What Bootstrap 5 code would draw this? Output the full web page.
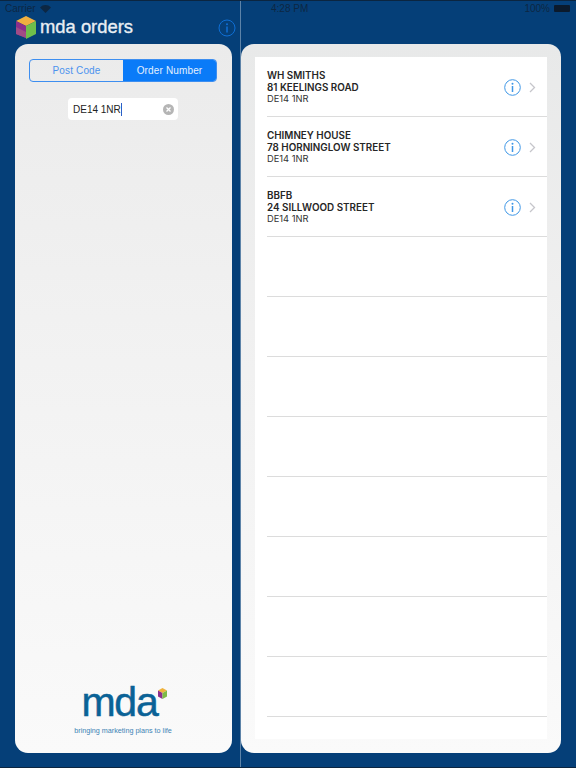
<!DOCTYPE html>
<html lang="en">
<head>
  <meta charset="UTF-8" />
  <meta name="viewport" content="width=device-width, initial-scale=1.0"/>
  <title>mda orders</title>
  <link href="https://cdn.jsdelivr.net/npm/bootstrap@5.3.0/dist/css/bootstrap.min.css" rel="stylesheet">
  <style>
    html, body { height: 768px; overflow: hidden; }
    body {
      background: #053f78;
      font-family: "Liberation Sans", Arial, sans-serif;
      border-top: 1px solid #0b2540;
      border-bottom: 1px solid #0b2540;
    }
    .app-shell { height: 766px; }
    .left-col { width: 241px; border-right: 1px solid #5d83a8; padding: 0 8px 14px 15px; }
    .right-col { width: 335px; padding: 0 15px 14px 0; }
    .status-bar { height: 15px; font-size: 10px; color: #0d2743; line-height: 15px; }
    .left-status { margin-left: -10px; gap: 4px; }
    .right-status { padding-left: 30px; margin-right: -9px; }
    .batt { width: 16px; height: 7px; background: #0b1a2c; border-radius: 1px; }
    .app-header { height: 28px; padding-bottom: 6px; }
    .brand-name { font-size: 18.4px; color: #e9eef3; line-height: 1; margin-left: 3px; -webkit-text-stroke: .35px #e9eef3; }
    .info-top { margin-right: -4px; margin-top: 2px; }
    .side-panel {
      flex: 1;
      background: linear-gradient(#ebebeb, #f2f2f2 45%, #fafafa);
      border-radius: 13px;
      padding: 15px 15px 17px 14px;
    }
    .seg-control { height: 23px; border: 1px solid #3d8ef0; border-radius: 4px; overflow: hidden; font-size: 10px; letter-spacing: .15px; }
    .seg-item { flex: 1; line-height: 21px; text-align: center; color: #4b92ee; }
    .seg-item.on { background: #0a7bf8; color: #e3f0fe; }
    .search-box { width: 110px; height: 22px; margin-top: 16px; background: #fff; border-radius: 4px; font-size: 10px; color: #222; padding: 0 4px 0 5px; }
    .caret-mark { display: inline-block; width: 1px; height: 13px; background: #2b5fc7; vertical-align: -3px; }
    .clear-x { width: 11px; height: 11px; }
    .footer-logo { margin-top: auto; text-align: center; }
    .logo-word { font-size: 41px; color: #0a6296; line-height: 32px; letter-spacing: -1.2px; -webkit-text-stroke: .5px #0a6296; margin-right: 7px; }
    .logo-tag { font-size: 7.2px; color: #3c83b5; line-height: 10px; margin-top: 3px; }
    .logo-wrap { position: relative; display: inline-block; }
    .logo-cube { position: absolute; top: 2px; right: -2px; }
    .orders-panel {
      flex: 1;
      background: linear-gradient(#e8e9e9, #f0f0f0 40%, #fafafa);
      border-radius: 13px;
      padding: 13px 14px;
    }
    .orders-table { height: 682px; background: #fff; overflow: hidden; }
    .order-row { height: 60px; margin-left: 12px; border-bottom: 1px solid #dcdcdc; color: #1c1c1c; }
    .order-text { padding-top: 2px; }
    .order-name { font-family: Inter, "Liberation Sans", sans-serif; font-size: 9.85px; font-weight: 600; line-height: 11.500px; color: #262626; }
    .order-code { font-family: Inter, "Liberation Sans", sans-serif; font-size: 9.3px; line-height: 11.500px; color: #333; }
    .row-tools { gap: 8px; padding: 1px 11px 0 0; }
  </style>
</head>
<body>

<div class="app-shell d-flex">

  <!-- Left column -->
  <div class="left-col d-flex flex-column flex-shrink-0">
    <div class="status-bar left-status d-flex align-items-center">
      <span>Carrier</span>
      <svg width="11" height="8" viewBox="0 0 11 8"><path d="M5.500 8 0 2.500C3-.8 8-.8 11 2.500Z" fill="#0d2743"/></svg>
    </div>
    <div class="app-header d-flex align-items-center">
      <svg width="22" height="23" viewBox="0 0 22 23">
        <path d="M1 5 11 0l10 5-10 5z" fill="#f0b040"/>
        <path d="M1 5l10 5v12L1 18z" fill="#8c2f8c"/>
        <path d="M1 11l10 5v6L1 18z" fill="#a14b86"/>
        <path d="M11 10l10-5v13l-10 5z" fill="#6fbf4b"/>
      </svg>
      <span class="brand-name">mda orders</span>
      <svg class="info-top ms-auto" width="18" height="18" viewBox="0 0 18 18" fill="none">
        <circle cx="9" cy="9" r="8" stroke="#0f6fd6" stroke-width="1"/>
        <circle cx="9" cy="5.200" r="1" fill="#0f6fd6"/>
        <path d="M9 7.500v6" stroke="#0f6fd6" stroke-width="1.500"/>
      </svg>
    </div>
    <div class="side-panel d-flex flex-column">
      <div class="seg-control d-flex">
        <div class="seg-item">Post Code</div>
        <div class="seg-item on">Order Number</div>
      </div>
      <div class="search-box d-flex align-items-center align-self-center">
        <span>DE14 1NR<span class="caret-mark"></span></span>
        <svg class="clear-x ms-auto" viewBox="0 0 11 11">
          <circle cx="5.500" cy="5.500" r="5.500" fill="#b5b5b5"/>
          <path d="M3.500 3.500l4 4m0-4-4 4" stroke="#fff" stroke-width="1.300"/>
        </svg>
      </div>
      <div class="footer-logo">
        <div class="logo-wrap">
          <div class="logo-word">mda</div>
          <svg class="logo-cube" width="9" height="11" viewBox="0 0 9 11">
            <path d="M0 2.500 4.500 0 9 2.500 4.500 5z" fill="#efb23c"/>
            <path d="M0 2.500 4.500 5v6L0 8.500z" fill="#8c2f8c"/>
            <path d="M4.500 5 9 2.500v6L4.500 11z" fill="#7dbb45"/>
          </svg>
        </div>
        <div class="logo-tag">bringing marketing plans to life</div>
      </div>
    </div>
  </div>

  <!-- Right column -->
  <div class="right-col d-flex flex-column flex-grow-1">
    <div class="status-bar right-status d-flex align-items-center">
      <span>4:28 PM</span>
      <span class="ms-auto me-1">100%</span>
      <span class="batt"></span>
    </div>
    <div class="app-header"></div>
    <div class="orders-panel">
      <div class="orders-table" id="orderRows"></div>
    </div>
  </div>

</div>

<script src="https://cdn.jsdelivr.net/npm/bootstrap@5.3.0/dist/js/bootstrap.bundle.min.js"></script>
<script>
  const orders = [
    ["WH SMITHS", "81 KEELINGS ROAD", "DE14 1NR"],
    ["CHIMNEY HOUSE", "78 HORNINGLOW STREET", "DE14 1NR"],
    ["BBFB", "24 SILLWOOD STREET", "DE14 1NR"]
  ];
  const tools = `<div class="row-tools d-flex align-items-center">
      <svg width="17" height="17" viewBox="0 0 17 17" fill="none">
        <circle cx="8.500" cy="8.500" r="7.800" stroke="#3f97e6" stroke-width="1"/>
        <circle cx="8.500" cy="4.800" r="1" fill="#3f97e6"/>
        <path d="M8.500 7v6" stroke="#3f97e6" stroke-width="1.500"/>
      </svg>
      <svg width="7" height="11" viewBox="0 0 7 11" fill="none"><path d="M1 1l4.500 4.500L1 10" stroke="#c6c6cb" stroke-width="1.300"/></svg>
    </div>`;
  let html = "";
  for (let i = 0; i < 12; i++) {
    const o = orders[i];
    html += `<div class="order-row d-flex justify-content-between align-items-center">` + (o
      ? `<div class="order-text"><div class="order-name">${o[0]}</div><div class="order-name">${o[1]}</div><div class="order-code">${o[2]}</div></div>${tools}`
      : "") + `</div>`;
  }
  document.getElementById("orderRows").innerHTML = html;
</script>

</body>
</html>
